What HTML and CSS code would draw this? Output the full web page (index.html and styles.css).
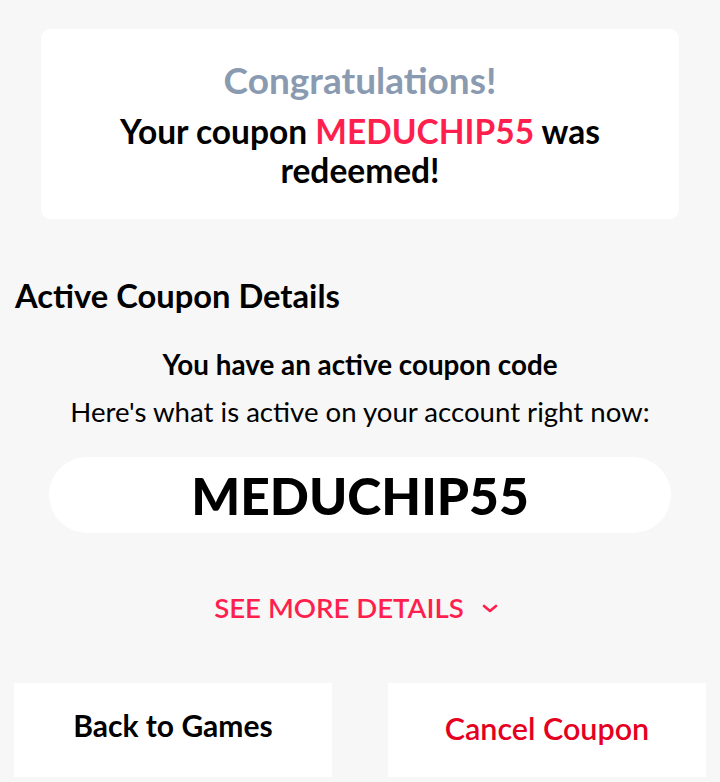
FILE: index.html
```html
<!DOCTYPE html>
<html lang="en">
<head>
    <meta charset="UTF-8">
    <meta name="viewport" content="width=device-width, initial-scale=1.0">
    <title>Coupon Redeemed</title>
    <link rel="stylesheet" href="styles.css">
</head>
<body>
    <div class="page">
        <div class="success-card">
            <h2 class="success-title">Congratulations!</h2>
            <p class="success-text">Your coupon <span class="code-highlight">MEDUCHIP55</span> was redeemed!</p>
        </div>
        <section class="active-coupon">
            <h3 class="section-title">Active Coupon Details</h3>
            <p class="active-heading">You have an active coupon code</p>
            <p class="active-sub">Here's what is active on your account right now:</p>
            <div class="coupon-pill">MEDUCHIP55</div>
            <button class="see-more">
                SEE MORE DETAILS
                <svg class="chevron" width="16" height="10" viewBox="0 0 16 10"><path d="M2 2 L8 7 L14 2" fill="none" stroke="currentColor" stroke-width="2.6" stroke-linecap="round" stroke-linejoin="round"/></svg>
            </button>
        </section>
        <div class="actions">
            <button class="action-btn">Back to Games</button>
            <button class="action-btn cancel">Cancel Coupon</button>
        </div>
    </div>
</body>
</html>
```

FILE: styles.css
```css
body {
    margin: 0;
    font-family: Lato, "Open Sans", sans-serif;
    background-color: #f7f7f7;
    color: #000;
}
.page {
    padding: 29px 0 0;
}
.success-card {
    margin: 0 41px;
    height: 190px;
    box-sizing: border-box;
    padding-top: 29px;
    background-color: #fff;
    border-radius: 9px;
    text-align: center;
}
.success-title {
    margin: 0;
    font-size: 37px;
    font-weight: 700;
    line-height: 44px;
    color: #8a9bb1;
}
.success-text {
    margin: 10px 60px 0;
    font-size: 33.5px;
    font-weight: 700;
    line-height: 39px;
}
.code-highlight {
    color: #ff1f4f;
}
.active-coupon {
    text-align: center;
}
.section-title {
    margin: 59px 0 0 15px;
    text-align: left;
    font-size: 32.7px;
    font-weight: 700;
    line-height: 36px;
}
.active-heading {
    margin: 35px 0 0;
    font-size: 27.8px;
    font-weight: 700;
    line-height: 32px;
}
.active-sub {
    margin: 14px 0 0;
    font-size: 27.6px;
    font-weight: 400;
    line-height: 34px;
}
.coupon-pill {
    margin: 28px 49px 0;
    height: 76px;
    line-height: 76px;
    background-color: #fff;
    border-radius: 38px;
    font-size: 51.5px;
    font-weight: 900;
}
.see-more {
    display: inline-flex;
    align-items: center;
    gap: 18px;
    margin: 58px 8px 0 0;
    padding: 0;
    border: none;
    background: none;
    font-family: inherit;
    font-size: 27.6px;
    line-height: 34px;
    font-weight: 600;
    color: #ff1f4f;
    cursor: pointer;
}
.chevron {
    margin-top: 2px;
}
.actions {
    display: flex;
    justify-content: space-between;
    gap: 56px;
    margin: 58px 14px 0;
}
.action-btn {
    flex: 1;
    height: 94px;
    padding: 0 0 10px;
    border: none;
    background-color: #fff;
    font-family: inherit;
    font-size: 30px;
    font-weight: 700;
    color: #000;
    cursor: pointer;
}
.action-btn.cancel {
    color: #e6001f;
    font-size: 30.5px;
    font-weight: 600;
    padding-bottom: 4px;
}
```
